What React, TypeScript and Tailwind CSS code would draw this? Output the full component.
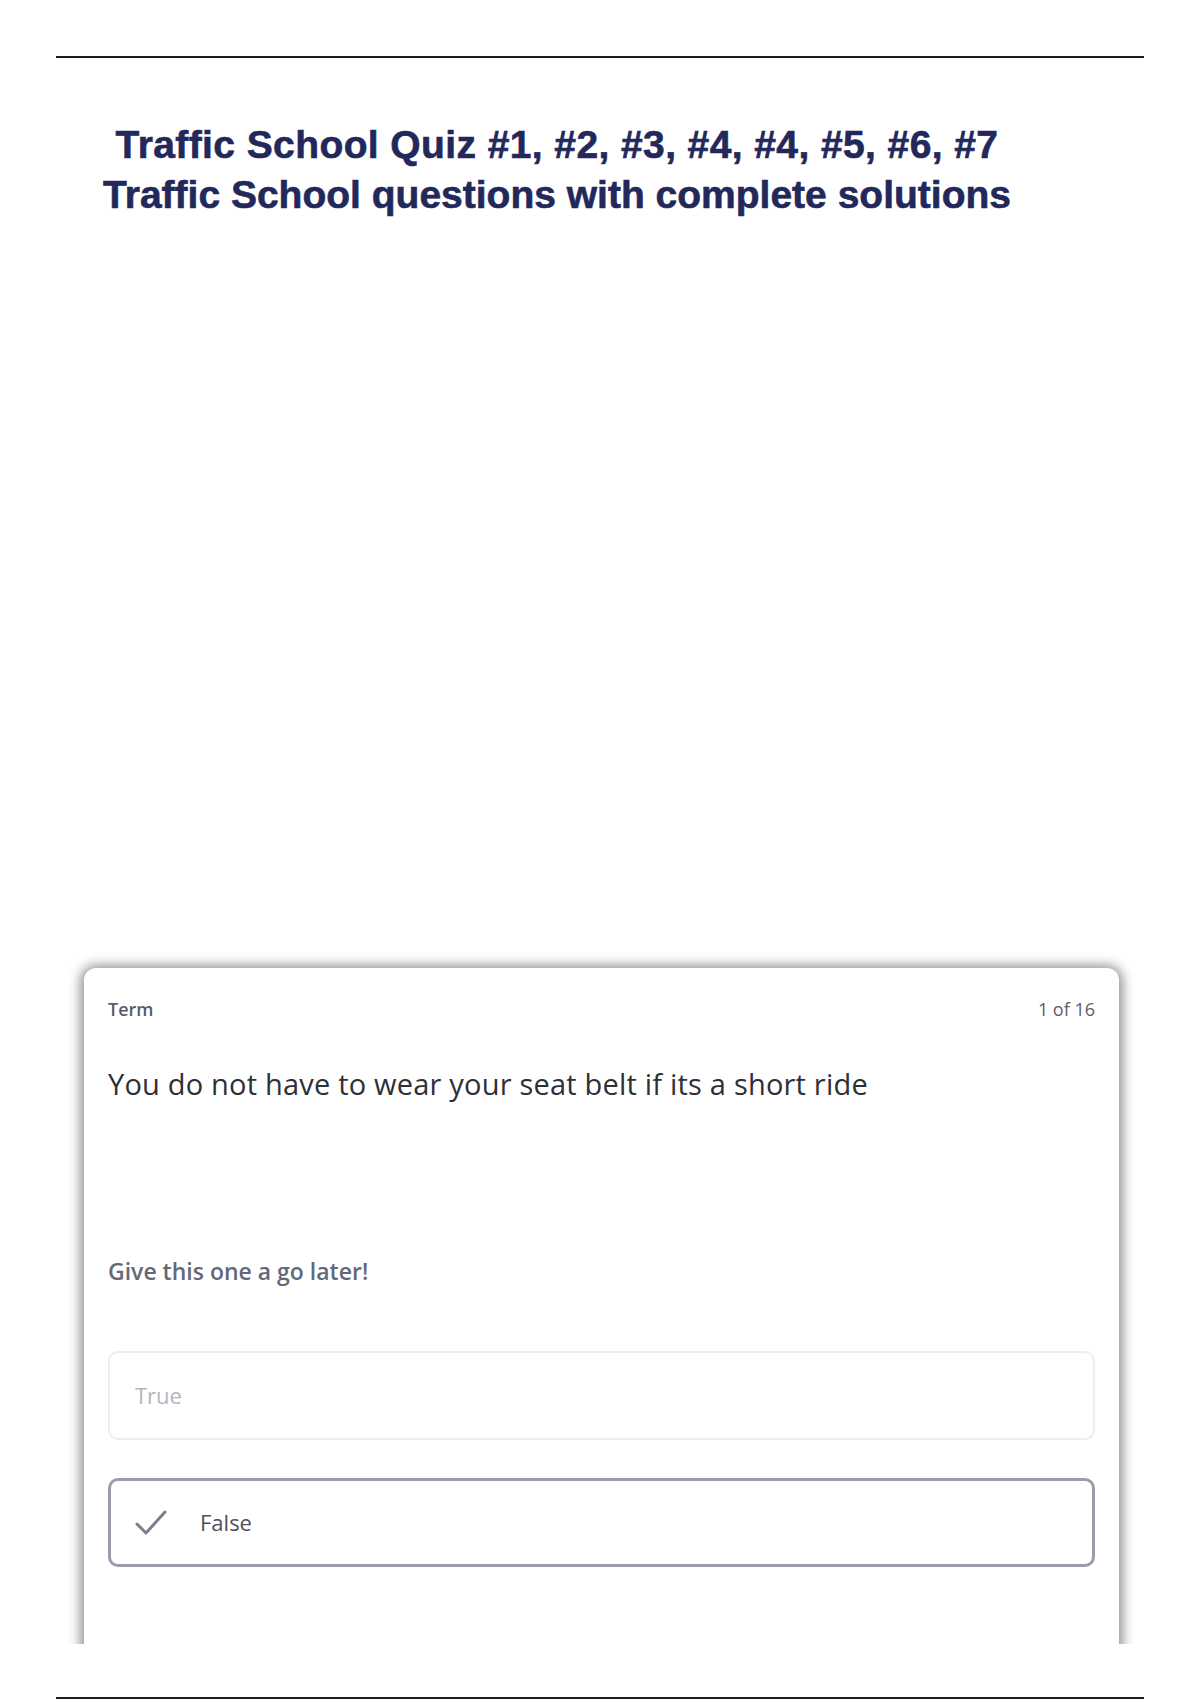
import React from 'react'

const titleFont = { fontFamily: '"Liberation Sans", Arial, sans-serif' }
const cardFont = { fontFamily: '"Open Sans", "Noto Sans", sans-serif' }

function CheckMark() {
  return (
    <svg width="34" height="30" viewBox="0 0 34 30" fill="none" className="shrink-0">
      <path d="M3 16 L12 25 L31 4" stroke="#7a7e8e" strokeWidth="3" strokeLinecap="round" strokeLinejoin="round" />
    </svg>
  )
}

export default function App() {
  return (
    <div className="w-[1200px] h-[1700px] bg-white flex flex-col overflow-hidden">
      <div className="mt-[56px] ml-[56px] w-[1088px] h-[2px] bg-[#1d1d1f]" />

      <div
        className="mt-[62px] ml-[56px] w-[1002px] text-center font-bold leading-[50px] text-[#23285a] [-webkit-text-stroke:0.6px_#23285a]"
        style={titleFont}
      >
        <div className="text-[39px] tracking-[0.4px]">Traffic School Quiz #1, #2, #3, #4, #4, #5, #6, #7</div>
        <div className="text-[39px]">Traffic School questions with complete solutions</div>
      </div>

      <div className="mt-[730px] ml-[64px] w-[1074px] h-[694px] overflow-hidden pt-[18px] shrink-0">
        <div
          className="ml-[20px] w-[1035px] h-[760px] bg-white rounded-t-[12px] shadow-[0_1px_12px_4px_rgba(0,0,0,0.42)] px-[24px] pt-[29px]"
          style={cardFont}
        >
          <div className="flex justify-between items-center h-[24px] text-[18px] text-[#5a5d68]">
            <span className="font-semibold">Term</span>
            <span>1 of 16</span>
          </div>

          <div className="mt-[44px] text-[29px] leading-[38px] text-[#2e3038] tracking-[0.2px]">
            You do not have to wear your seat belt if its a short ride
          </div>

          <div className="mt-[153px] text-[23px] leading-[30px] font-semibold text-[#646878]">
            Give this one a go later!
          </div>

          <div className="mt-[65px] h-[89px] rounded-[10px] border-2 border-[#eceef2] flex items-center px-[25px] text-[22px] text-[#b2b5c0]">
            True
          </div>

          <div className="mt-[38px] h-[89px] rounded-[10px] border-[3px] border-[#9a9daa] flex items-center gap-[32px] pl-[23px] text-[22px] text-[#4d505c]">
            <CheckMark />
            <span>False</span>
          </div>
        </div>
      </div>

      <div className="mt-[53px] ml-[56px] w-[1088px] h-[2px] bg-[#1d1d1f] shrink-0" />
    </div>
  )
}
